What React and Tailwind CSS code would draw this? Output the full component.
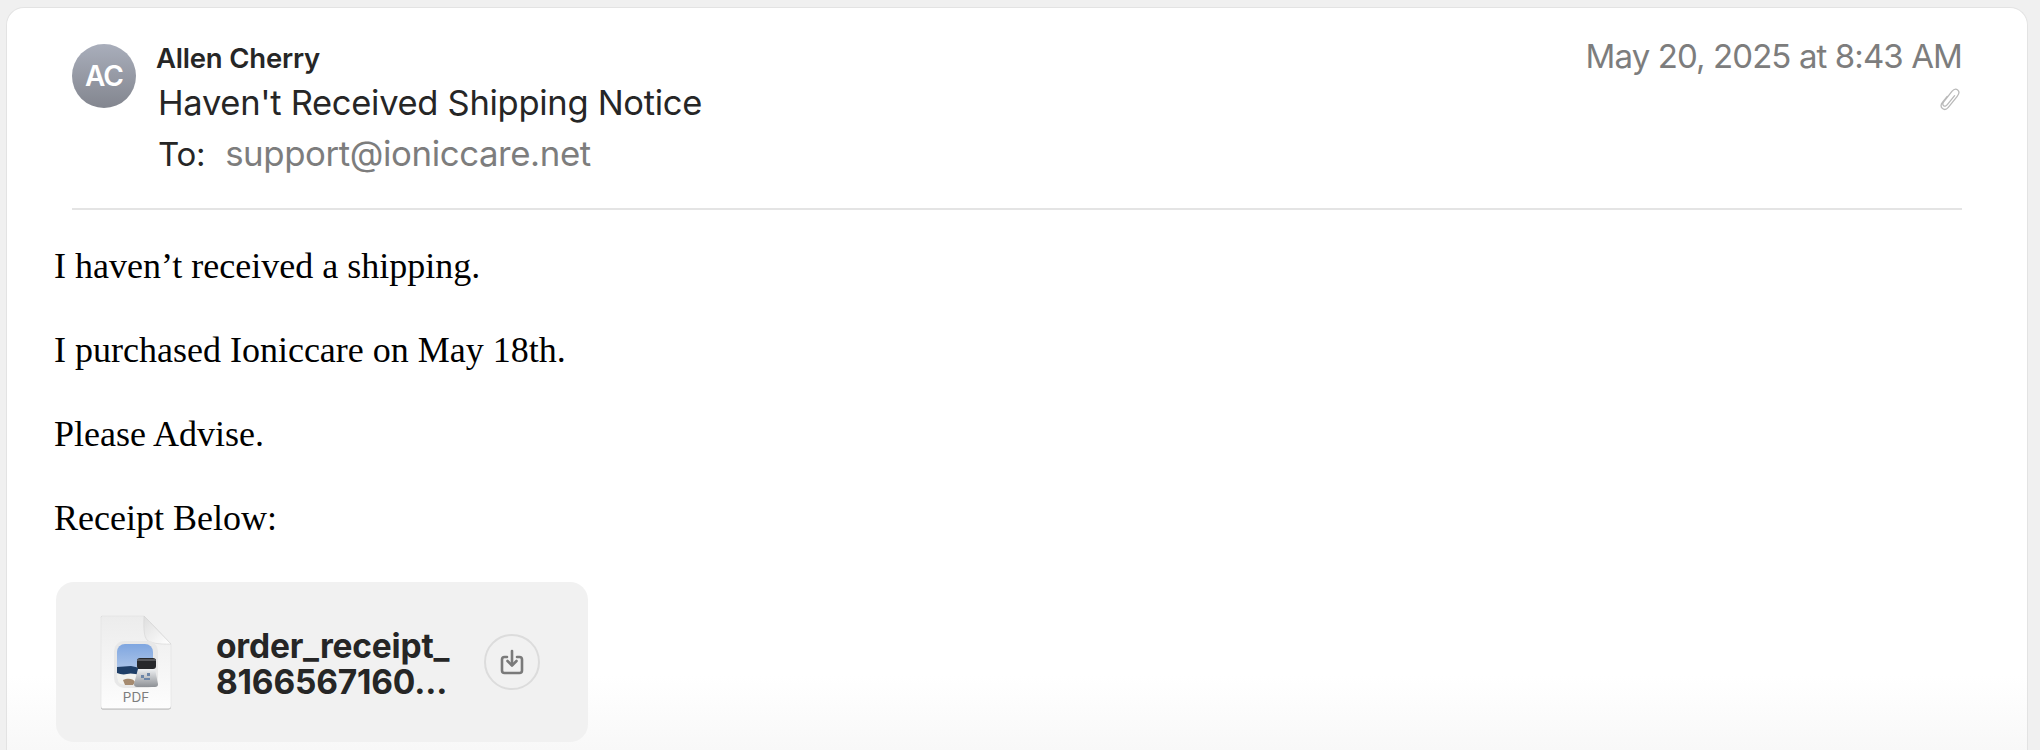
import { useId } from "react";

const BODY_LINES = [
  "I haven’t received a shipping.",
  "I purchased Ioniccare on May 18th.",
  "Please Advise.",
  "Receipt Below:",
];

function PaperclipIcon() {
  return (
    <svg width="22" height="24" viewBox="0 0 22 24" fill="none" stroke="#b9b9b9" strokeWidth="1.3" strokeLinecap="round" strokeLinejoin="round">
      <path d="M8.2 9.5 3.4 15.4c-1.9 2.4-1.7 4.8.1 6.2 1.8 1.4 4 .9 5.8-1.3l8.9-11c2-2.5 2.2-5 .5-6.400-1.800-1.400-4-.8-5.800 1.400L4.700 14.900c-1.200 1.500-1.200 3-.1 3.800 1.100.9 2.500.5 3.700-1l7.300-9" />
    </svg>
  );
}

function DownloadIcon() {
  return (
    <svg width="24" height="27" viewBox="0 0 24 27" fill="none" stroke="#7a7a7a" strokeWidth="2.6" strokeLinecap="round" strokeLinejoin="round">
      <path d="M7 8H4.500C2.800 8 2 8.900 2 10.500v11C2 23.200 2.800 24 4.500 24h15c1.700 0 2.500-.8 2.500-2.500v-11C22 8.900 21.200 8 19.500 8H17" />
      <path d="M12 2v14" />
      <path d="m7.500 12 4.500 4.500 4.500-4.500" />
    </svg>
  );
}

function PdfFileIcon() {
  const id = useId();
  return (
    <svg width="72" height="96" viewBox="0 0 72 96" className="block">
      <defs>
        <linearGradient id={`${id}sheet`} x1="0" y1="0" x2="0" y2="1">
          <stop offset="0" stopColor="#ececec" />
          <stop offset="1" stopColor="#fdfdfd" />
        </linearGradient>
        <linearGradient id={`${id}fold`} x1="0" y1="0" x2="1" y2="1">
          <stop offset="0" stopColor="#dedede" />
          <stop offset="1" stopColor="#ffffff" />
        </linearGradient>
        <linearGradient id={`${id}sky`} x1="0" y1="0" x2="0" y2="1">
          <stop offset="0" stopColor="#7fa6e0" />
          <stop offset="1" stopColor="#c8d8ef" />
        </linearGradient>
        <linearGradient id={`${id}glass`} x1="0" y1="0" x2="0" y2="1">
          <stop offset="0" stopColor="#eef0f2" />
          <stop offset="1" stopColor="#8d9095" />
        </linearGradient>
      </defs>
      <path d="M1 2.500C1 1.700 1.700 1 2.500 1H44l27 28v63c0 1.600-1 2.500-2.500 2.500h-66C1.700 94.500 1 93.600 1 92z" fill="#a9a9a9" />
      <path d="M1 2.500C1 1.700 1.700 1 2.500 1H44l27 28v62c0 1.600-1 2.500-2.500 2.500h-66C1.700 93.500 1 92.600 1 91z" fill={`url(#${id}sheet)`} stroke="#e0e0e0" strokeWidth="0.6" />
      <path d="M44 1c-.5 14 0 20 3 24 3 3 12 4.500 24 4z" fill={`url(#${id}fold)`} stroke="#d4d4d4" strokeWidth="0.6" />
      <rect x="14" y="26" width="44" height="47" rx="10" fill="#e8e8e8" />
      <rect x="17" y="29" width="36" height="41" rx="8" fill={`url(#${id}sky)`} />
      <path d="M17 52h36v10c0 5-3 8-8 8H25c-5 0-8-3-8-8z" fill="#f2f2ef" />
      <path d="M17 52l14-1 14 3v5c-8 2-12-2-18 0-4 1-7 0-10-1z" fill="#1f3f68" />
      <path d="M23 65c4-2 10-2 12 2l-2 3H25z" fill="#a58a6f" />
      <path d="M38 54h17l3 15c.2 2-1 3-3 3H37c-2 0-3-1-3-3z" fill={`url(#${id}glass)`} />
      <rect x="37" y="43" width="19" height="11" rx="3" fill="#27282b" />
      <rect x="37" y="44" width="19" height="2" fill="#55565a" />
      <path d="M41 60h3v3h-3zM47 58h3v3h-3zM44 63h6v2h-6z" fill="#6d86a8" />
      <text x="36" y="87" textAnchor="middle" fontSize="13.500" fill="#7d7d7d" fontFamily="Inter, sans-serif">PDF</text>
    </svg>
  );
}

export default function App() {
  return (
    <div className="h-[750px] overflow-hidden bg-[#f0f0f0] pt-[7px] pl-[6px] pr-[12px] font-['Inter',sans-serif]">
      <div className="h-[743px] rounded-t-[18px] border border-b-0 border-[#e3e3e3] bg-[linear-gradient(to_bottom,#ffffff_90%,#f8f8f8_100%)] pt-[33px]">
        <div className="mx-[65px] flex justify-between border-b-2 border-[#e4e4e4] h-[169px]">
          <div className="flex">
            <div className="mt-[3px] flex h-[64px] w-[64px] items-center justify-center rounded-full bg-gradient-to-b from-[#a9aebb] to-[#83868f] text-[28px] font-semibold tracking-[-1px] text-white">
              AC
            </div>
            <div className="ml-[20px] text-[#262626]">
              <div className="mt-[1px] text-[27.500px] leading-[32px] font-semibold tracking-[-0.2px]">Allen Cherry</div>
              <div className="mt-[6px] ml-[2px] text-[34.500px] leading-[46px] tracking-[-0.3px]">Haven't Received Shipping Notice</div>
              <div className="mt-[2px] ml-[2px] flex items-baseline text-[33px] leading-[50px]">
                <span className="tracking-[-0.3px]">To:</span>
                <span className="ml-[20px] text-[34.800px] tracking-[-0.4px] text-[#7d7d7d]">support@ioniccare.net</span>
              </div>
            </div>
          </div>
          <div className="flex flex-col items-end">
            <div className="-mt-[8px] text-[33px] leading-[46px] tracking-[-0.9px] text-[#7d7d7d]">May 20, 2025 at 8:43 AM</div>
            <div className="mt-[8px] mr-[1px]"><PaperclipIcon /></div>
          </div>
        </div>
        <div className="mt-[36px] ml-[47px] font-['Liberation_Serif',serif] text-[36px] leading-[40px] text-black">
          {BODY_LINES.map((line) => (
            <p key={line} className="mb-[44px]">{line}</p>
          ))}
        </div>
        <div className="mt-[4px] ml-[49px] flex h-[160px] w-[532px] items-center rounded-[18px] bg-[#f1f1f1] text-[#262626]">
          <div className="ml-[44px] mt-[2px] w-[72px]"><PdfFileIcon /></div>
          <div className="ml-[44px] w-[240px] pt-[3px] text-[33.500px] leading-[36px] font-bold tracking-[-0.2px]">
            <div>order_receipt_</div>
            <div>8166567160...</div>
          </div>
          <div className="ml-[28px] flex h-[56px] w-[56px] items-center justify-center rounded-full border-2 border-[#dcdcdc]">
            <DownloadIcon />
          </div>
        </div>
      </div>
    </div>
  );
}
